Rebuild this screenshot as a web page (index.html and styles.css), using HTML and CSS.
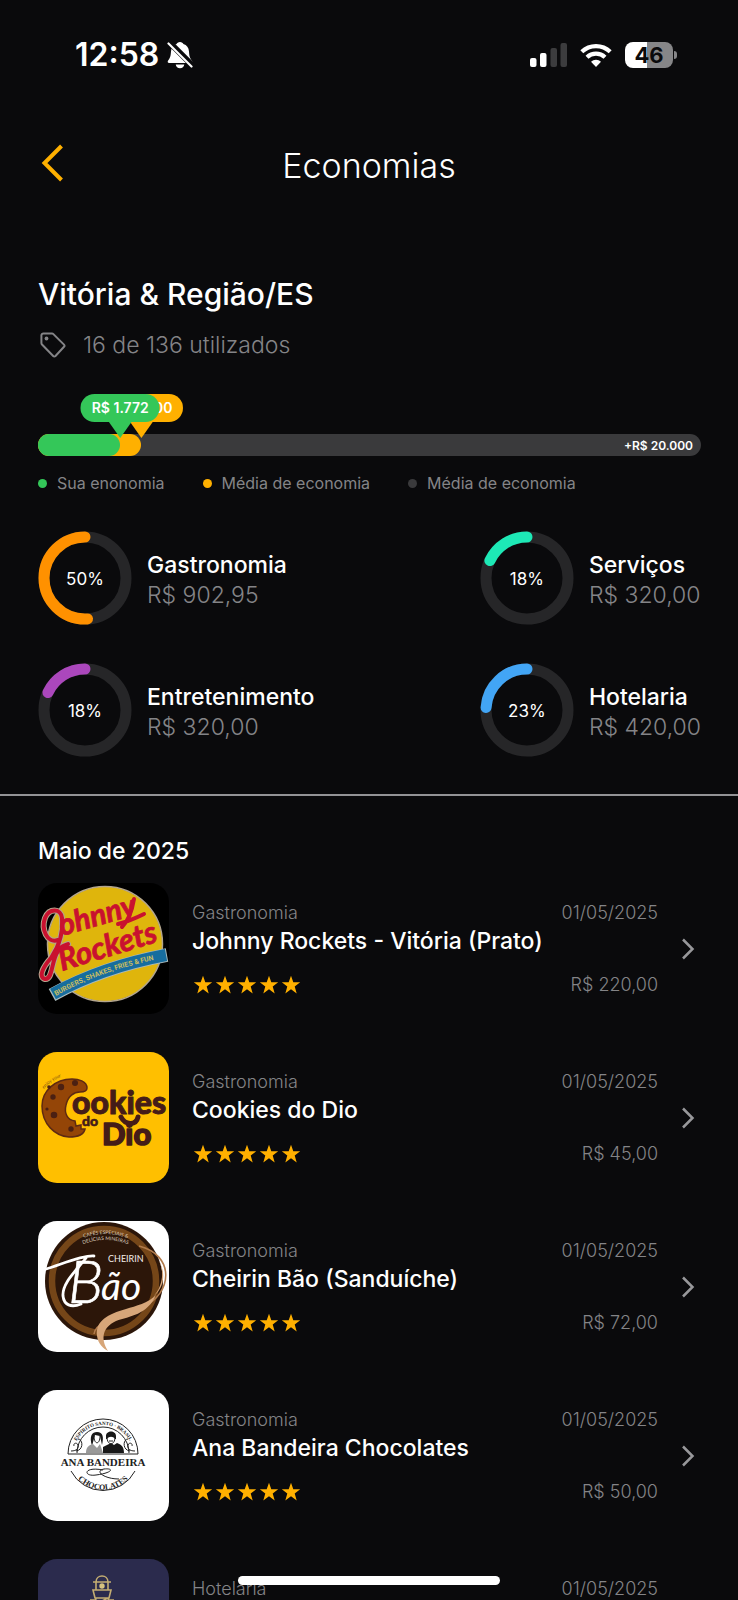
FILE: index.html
```html
<!DOCTYPE html>
<html lang="pt-BR">
<head>
<meta charset="utf-8">
<meta name="viewport" content="width=device-width, initial-scale=1">
<title>Economias</title>
<link rel="stylesheet" href="styles.css">
</head>
<body>
<svg width="0" height="0" class="defs" aria-hidden="true">
  <defs>
    <symbol id="star" viewBox="0 0 20 20"><path d="M10 0.8 12.3 7.3H19.2L13.7 11.5 15.7 18.4 10 14.3 4.3 18.4 6.3 11.5 0.8 7.3H7.7Z"/></symbol>
    <symbol id="chevron" viewBox="0 0 14 22"><path d="M2 1.5 11.5 11 2 20.5" fill="none" stroke="currentColor" stroke-width="2.5"/></symbol>
  </defs>
</svg>
<div class="screen">
  <div class="status">
    <div class="status-side">
      <span class="clock">12:58</span>
      <svg class="bell" width="26" height="28" viewBox="0 0 26 28" aria-label="Silencioso">
        <path fill="currentColor" d="M13 1c1.8 0 3 1 3.4 2.1 3.400 1 5.300 3.800 5.600 7.400.3 4.500.8 6.500 3 9.200.7 1 .2 2.300-1.100 2.300H2.100C.8 22 .3 20.700 1 19.700c2.200-2.700 2.700-4.700 3-9.200.3-3.600 2.200-6.400 5.600-7.400C10 2 11.200 1 13 1ZM8.700 23.500h8.600c-.3 2.200-2 3.700-4.300 3.700s-4-1.500-4.300-3.700Z"/>
        <path d="M2 1 26 25" stroke="#0a0a0c" stroke-width="6"/>
        <path d="M1.500 2.500 24.500 25.500" stroke="currentColor" stroke-width="2.200" stroke-linecap="round"/>
      </svg>
    </div>
    <div class="status-side">
      <svg width="37" height="24" viewBox="0 0 37 24" aria-label="Sinal">
        <g fill="#fff"><rect x="0" y="15" width="6.500" height="9" rx="2"/><rect x="10" y="10" width="6.500" height="14" rx="2"/></g>
        <g fill="#3c3c3e"><rect x="20.500" y="5" width="6.500" height="19" rx="2"/><rect x="30.500" y="0" width="6.500" height="24" rx="2"/></g>
      </svg>
      <svg class="wifi" width="32" height="24" viewBox="0 0 32 24" aria-label="Wi-Fi">
        <g fill="none" stroke="#fff" stroke-width="4.200"><path d="M1.800 8.800a20.500 20.500 0 0 1 28.400 0"/><path d="M7 14.300a13 13 0 0 1 18 0"/></g>
        <path fill="#fff" d="M16 24 11 18.700a7.200 7.200 0 0 1 10 0Z"/>
      </svg>
      <div class="battery"><span>46</span></div>
    </div>
  </div>

  <header class="header">
    <button class="back" type="button" aria-label="Voltar">
      <svg width="22" height="38" viewBox="0 0 22 38"><path d="M20.500 2 3.500 19 20.500 36" fill="none" stroke="currentColor" stroke-width="4"/></svg>
    </button>
    <h1>Economias</h1>
  </header>

  <section class="summary">
    <h2>Vitória &amp; Região/ES</h2>
    <p class="used">
      <svg width="26" height="26" viewBox="0 0 26 26" aria-hidden="true"><path d="M3.500 1.500H12a2 2 0 0 1 1.400.6L24 12.600a1.600 1.600 0 0 1 0 2.200L15.500 24a1.600 1.600 0 0 1-2.300 0L2 12.500a2 2 0 0 1-.6-1.400V3.500a2 2 0 0 1 2.100-2Z" fill="none" stroke="currentColor" stroke-width="2"/><circle cx="6.500" cy="6.500" r="1.900" fill="currentColor"/></svg>
      16 de 136 utilizados
    </p>

    <div class="bar">
      <div class="fill average" style="width:15.5%"></div>
      <div class="fill own" style="width:12.3%"></div>
      <span class="tip average" style="left:15.6%">R$ 2.300</span>
      <span class="tip own" style="left:12.4%">R$ 1.772</span>
      <span class="limit">+R$ 20.000</span>
    </div>
    <ul class="legend">
      <li class="l-own">Sua enonomia</li>
      <li class="l-average">Média de economia</li>
      <li class="l-rest">Média de economia</li>
    </ul>

    <div class="rings">
      <div class="ring-item">
        <div class="ring"><svg viewBox="0 0 94 94"><circle class="track" cx="47" cy="47" r="41"/><circle class="arc food" pathLength="100" stroke-dasharray="51 100" cx="47" cy="47" r="41"/></svg><span>50%</span></div>
        <div class="ring-text"><h3>Gastronomia</h3><p>R$ 902,95</p></div>
      </div>
      <div class="ring-item">
        <div class="ring"><svg viewBox="0 0 94 94"><circle class="track" cx="47" cy="47" r="41"/><circle class="arc services" pathLength="100" stroke-dasharray="18 100" cx="47" cy="47" r="41"/></svg><span>18%</span></div>
        <div class="ring-text"><h3>Serviços</h3><p>R$ 320,00</p></div>
      </div>
      <div class="ring-item">
        <div class="ring"><svg viewBox="0 0 94 94"><circle class="track" cx="47" cy="47" r="41"/><circle class="arc fun" pathLength="100" stroke-dasharray="18 100" cx="47" cy="47" r="41"/></svg><span>18%</span></div>
        <div class="ring-text"><h3>Entretenimento</h3><p>R$ 320,00</p></div>
      </div>
      <div class="ring-item">
        <div class="ring"><svg viewBox="0 0 94 94"><circle class="track" cx="47" cy="47" r="41"/><circle class="arc hotel" pathLength="100" stroke-dasharray="24 100" cx="47" cy="47" r="41"/></svg><span>23%</span></div>
        <div class="ring-text"><h3>Hotelaria</h3><p>R$ 420,00</p></div>
      </div>
    </div>
  </section>

  <section class="history">
    <h2>Maio de 2025</h2>
    <a class="row" href="#johnny-rockets">
      <svg class="thumb" viewBox="0 0 131 131" role="img" aria-label="Johnny Rockets">
        <rect width="131" height="131" fill="#000"/>
        <circle cx="67" cy="61" r="57.500" fill="#dfb50c" stroke="#b3a58d" stroke-width="1.500"/>
        <g fill="none" stroke-linecap="round" stroke-linejoin="round">
          <path d="M20 57C9 61 3 46 7 35c4-10 16-10 17 0 2 18-5 31-11 40C5 84 0 94 7 96c8 1 6-18 13-28 2-4 5-5 10-7" stroke="#b3a58d" stroke-width="6"/>
          <path d="M20 57C9 61 3 46 7 35c4-10 16-10 17 0 2 18-5 31-11 40C5 84 0 94 7 96c8 1 6-18 13-28 2-4 5-5 10-7" stroke="#c9112f" stroke-width="4"/>
          <path d="M80 41C88 39 96 36 106 31M96 16C94 28 90 38 84 44" stroke="#c9112f" stroke-width="4"/>
        </g>
        <g fill="#c9112f" stroke="#c9112f" stroke-width="0.800" font-family="Lato, sans-serif" font-style="italic" font-weight="700">
          <text font-size="30" transform="translate(24 53) rotate(-16)">ohnny</text>
          <text font-size="31" transform="translate(24 88) rotate(-17)">Rockets</text>
        </g>
        <path d="M14 112Q64 84 129 72" fill="none" stroke="#a9b9ba" stroke-width="13.500"/>
        <path d="M15 111Q64 84 128 72" fill="none" stroke="#176d9e" stroke-width="12"/>
        <path id="jr-text" d="M18 113Q65 86 131 74" fill="none"/>
        <text font-family="Roboto, sans-serif" font-size="7" font-weight="700" fill="#c9bd5e"><textPath href="#jr-text">BURGERS, SHAKES, FRIES &amp; FUN</textPath></text>
      </svg>
      <div class="info">
        <span class="meta">Gastronomia</span><time class="meta end">01/05/2025</time>
        <strong>Johnny Rockets - Vitória (Prato)</strong>
        <span class="stars" role="img" aria-label="5 estrelas"><svg><use href="#star"/></svg><svg><use href="#star"/></svg><svg><use href="#star"/></svg><svg><use href="#star"/></svg><svg><use href="#star"/></svg></span><span class="meta end price">R$ 220,00</span>
      </div>
      <svg class="go" aria-hidden="true"><use href="#chevron"/></svg>
    </a>
    <a class="row" href="#cookies-do-dio">
      <svg class="thumb" viewBox="0 0 131 131" role="img" aria-label="Cookies do Dio">
        <rect width="131" height="131" fill="#ffbf00"/>
        <path d="M49 36C49 29 40 27 34 27 17 27 4 39 4 54c0 18 13 30 27 31 9 0 15-3 16-8l-4 0 0-4-5 1-1-5c-8-1-11-8-9-16 2-9 8-13 14-13 4 0 7-1 7-4Z" fill="#944507" stroke="#5e2a12" stroke-width="1.500"/>
        <g fill="#4b2012"><circle cx="23" cy="35" r="3.200"/><circle cx="37" cy="31" r="3"/><circle cx="15" cy="45" r="2.700"/><circle cx="11" cy="35" r="1.800"/><circle cx="16" cy="63" r="3.300"/><circle cx="33" cy="77" r="2.700"/><circle cx="9" cy="57" r="1.600"/></g>
        <path id="cd-enjoy" d="M6 37Q14 27 29 23" fill="none"/>
        <text font-family="Lato, sans-serif" font-size="5" font-style="italic" fill="#8a5a10"><textPath href="#cd-enjoy">enjoy your</textPath></text>
        <g font-family="Lato, sans-serif" font-weight="900" fill="#451c18" stroke="#451c18" stroke-linejoin="round">
          <text x="34" y="62" font-size="32" stroke-width="1">ookies</text>
          <text x="44" y="74" font-size="14" stroke-width="0.600">do</text>
          <text x="64" y="93" font-size="31" stroke-width="1.500">Dio</text>
        </g>
        <path d="M83 65c4 8 15 9 17 0" fill="none" stroke="#451c18" stroke-width="5" stroke-linecap="round"/>
      </svg>
      <div class="info">
        <span class="meta">Gastronomia</span><time class="meta end">01/05/2025</time>
        <strong>Cookies do Dio</strong>
        <span class="stars" role="img" aria-label="5 estrelas"><svg><use href="#star"/></svg><svg><use href="#star"/></svg><svg><use href="#star"/></svg><svg><use href="#star"/></svg><svg><use href="#star"/></svg></span><span class="meta end price">R$ 45,00</span>
      </div>
      <svg class="go" aria-hidden="true"><use href="#chevron"/></svg>
    </a>
    <a class="row" href="#cheirin-bao">
      <svg class="thumb" viewBox="0 0 131 131" role="img" aria-label="Cheirin Bão">
        <rect width="131" height="131" fill="#fff"/>
        <circle cx="66" cy="60" r="59" fill="#2c1609"/>
        <circle cx="66" cy="60" r="52" fill="#2c1609" stroke="#754618" stroke-width="6.500"/>
        <path id="cb-a" d="M43 18Q66 8 92 18" fill="none"/><path id="cb-b" d="M43 24Q66 14 92 24" fill="none"/>
        <g font-family="Lato, sans-serif" font-size="5" fill="#d9cabb"><text><textPath href="#cb-a" startOffset="3">CAFÉS ESPECIAIS &amp;</textPath></text><text><textPath href="#cb-b" startOffset="2">DELÍCIAS MINEIRAS</textPath></text></g>
        <path d="M101 25c36 9 34 47 4 61-18 8-48 14-49 27" fill="none" stroke="#b17a4b" stroke-width="1.600"/>
        <path d="M118 74c-8 8-20 11-30 14-18 5-31 12-29 27 1 8 7 13 11 15-8-13-5-24 8-30 14-5 31-6 40-26Z" fill="#d7a679"/>
        <path d="M121 40c6 12 3 26-6 36 10-8 14-22 6-36Z" fill="#d7a679"/>
        <text x="70" y="41" font-family="Lato, sans-serif" font-size="9" fill="#f4eee9">CHEIRIN</text>
        <path d="M8 48C22 44 44 34 56 35M48 37C38 50 24 62 25 75c1 9 8 12 18 8" fill="none" stroke="#fff" stroke-width="2.800" stroke-linecap="round"/>
        <text x="30" y="82" font-family="Lato, sans-serif" font-size="60" font-style="italic" font-weight="300" fill="#fff" stroke="#fff" stroke-width="0.600">B</text>
        <text x="63" y="79" font-family="Lato, sans-serif" font-size="39" font-style="italic" fill="#fff">ão</text>
      </svg>
      <div class="info">
        <span class="meta">Gastronomia</span><time class="meta end">01/05/2025</time>
        <strong>Cheirin Bão (Sanduíche)</strong>
        <span class="stars" role="img" aria-label="5 estrelas"><svg><use href="#star"/></svg><svg><use href="#star"/></svg><svg><use href="#star"/></svg><svg><use href="#star"/></svg><svg><use href="#star"/></svg></span><span class="meta end price">R$ 72,00</span>
      </div>
      <svg class="go" aria-hidden="true"><use href="#chevron"/></svg>
    </a>
    <a class="row" href="#ana-bandeira">
      <svg class="thumb" viewBox="0 0 131 131" role="img" aria-label="Ana Bandeira Chocolates">
        <rect width="131" height="131" fill="#fff"/>
        <g fill="none" stroke="#222" stroke-width="1"><path d="M30 64a35 35 0 0 1 70 0M39 63a26 26 0 0 1 52 0M33 81a36 36 0 0 0 64 0M30 64H100"/>
          <path d="M33 61c6 0 8-3 7-6s-5-2-4 1M38 61c8-1 7-12 2-12M97 61c-6 0-8-3-7-6s5-2 4 1M92 61c-8-1-7-12-2-12M65 80c-20-4-20 7-7 5 16-2 19-7 8-6-10 2 0 10 15 10"/></g>
        <path d="M65 63V57l8-4 3 2 3-2c5 2 7 4 7 10ZM68 46c0-6 10-6 10 0v3h-1c-2-3-6-3-8 0h-1ZM54 56c-3-10 0-14 5-14 6 0 7 5 5 13l-2-9-5-1Z" fill="#181818"/>
        <path d="M48 63c0-6 3-8 7-9l4 4 3-4 3 9Z" fill="#999"/>
        <g fill="none" stroke="#222" stroke-width="1"><path d="M56 46c0 9 6 9 6 0M69 47c0 9 8 9 8 0M71 51h4"/></g>
        <path id="ab-top" d="M35 65a30 30 0 0 1 60 0" fill="none"/><path id="ab-bottom" d="M33 79a35 35 0 0 0 64 0" fill="none"/>
        <g font-family="'Liberation Serif', serif" font-weight="700" fill="#222">
          <text font-size="5" text-anchor="middle"><textPath href="#ab-top" startOffset="50%">ESPÍRITO SANTO · BRASIL</textPath></text>
          <text x="65" y="76" font-size="11" text-anchor="middle">ANA BANDEIRA</text>
          <text font-size="8" text-anchor="middle"><textPath href="#ab-bottom" startOffset="50%">CHOCOLATES</textPath></text>
        </g>
      </svg>
      <div class="info">
        <span class="meta">Gastronomia</span><time class="meta end">01/05/2025</time>
        <strong>Ana Bandeira Chocolates</strong>
        <span class="stars" role="img" aria-label="5 estrelas"><svg><use href="#star"/></svg><svg><use href="#star"/></svg><svg><use href="#star"/></svg><svg><use href="#star"/></svg><svg><use href="#star"/></svg></span><span class="meta end price">R$ 50,00</span>
      </div>
      <svg class="go" aria-hidden="true"><use href="#chevron"/></svg>
    </a>
    <a class="row" href="#hotel">
      <svg class="thumb" viewBox="0 0 131 131" role="img" aria-label="Hotel">
        <rect width="131" height="131" fill="#2b2b4d"/>
        <g fill="none" stroke="#c3ad72" stroke-width="1.600"><path d="M58 23c0-8 12-8 12 0M55 23h18M58 23v8M70 23v8M55 31h18l-2 8H57ZM58 39l-1 8M70 39l2 8M58 45l12-6M52 41h6M70 41h6M56 47h16l3 45H53Z"/></g>
        <circle cx="64" cy="27" r="2.700" fill="#d5c180"/>
      </svg>
      <div class="info">
        <span class="meta">Hotelaria</span><time class="meta end">01/05/2025</time>
      </div>
      <svg class="go" aria-hidden="true"><use href="#chevron"/></svg>
    </a>
  </section>
  <div class="home-indicator"></div>
</div>
</body>
</html>
```

FILE: styles.css
```css
:root {
  --bg: #0a0a0c;
  --muted: #848487;
  --amber: #ffb000;
  --green: #34c759;
  --rest: #3a3a3c;
}
* { box-sizing: border-box; }
body {
  margin: 0;
  background: var(--bg);
  color: #fff;
  font-family: Inter, "Liberation Sans", sans-serif;
}
h1, h2, h3, p, ul { margin: 0; padding: 0; }
.defs { position: absolute; }
.screen {
  position: relative;
  height: 100vh;
  overflow: hidden;
}

.status {
  display: flex;
  justify-content: space-between;
  align-items: center;
  height: 110px;
  padding: 0 61px 0 75px;
}
.status-side { display: flex; align-items: center; }
.clock { font-size: 32px; font-weight: 600; line-height: 32px; }
.bell { margin-left: 8px; }
.wifi { margin: 0 13px; }
.battery {
  position: relative;
  width: 48px;
  height: 26px;
  margin-right: 4px;
  border-radius: 8px;
  background: linear-gradient(90deg, #fff 46%, #868688 46%);
  color: var(--bg);
  font-size: 22px;
  font-weight: 700;
  line-height: 26px;
  text-align: center;
}
.battery::after {
  content: "";
  position: absolute;
  left: 49px;
  top: 9px;
  width: 3px;
  height: 8px;
  border-radius: 0 4px 4px 0;
  background: #868688;
}

.header {
  display: grid;
  grid-template-columns: 60px 1fr 60px;
  align-items: center;
  height: 112px;
  padding: 0 38px;
}
.header h1 { font-size: 34px; font-weight: 300; line-height: 40px; text-align: center; }
.back {
  display: flex;
  padding: 0 3px 6px;
  border: 0;
  background: none;
  color: var(--amber);
}

.summary {
  padding: 54px 37px 37px 38px;
  border-bottom: 2px solid #939396;
}
.summary h2 { font-size: 30px; font-weight: 500; line-height: 36px; }
.used {
  display: flex;
  align-items: center;
  gap: 17px;
  margin-top: 19px;
  padding-left: 2px;
  color: var(--muted);
  font-size: 23px;
  font-weight: 300;
  line-height: 28px;
}
.bar {
  position: relative;
  display: flex;
  align-items: center;
  justify-content: flex-end;
  height: 22px;
  margin-top: 75px;
  padding-right: 8px;
  border-radius: 11px;
  background: var(--rest);
}
.limit { font-size: 12px; font-weight: 600; }
.fill {
  position: absolute;
  left: 0;
  top: 0;
  height: 100%;
  border-radius: 11px;
}
.average { background: var(--amber); }
.own { background: var(--green); }
.tip {
  position: absolute;
  bottom: 34px;
  width: 79px;
  border-radius: 14px;
  font-size: 14px;
  font-weight: 600;
  line-height: 28px;
  text-align: center;
  transform: translateX(-50%);
}
.tip.average { width: 84px; }
.tip::after {
  content: "";
  position: absolute;
  left: calc(50% - 12px);
  top: 27px;
  width: 24px;
  height: 17px;
  background: inherit;
  clip-path: polygon(0 0, 100% 0, 50% 100%);
}
.legend {
  display: flex;
  gap: 38px;
  margin-top: 18px;
  color: var(--muted);
  font-size: 16px;
  line-height: 18px;
  list-style: none;
}
.legend li { display: flex; align-items: center; gap: 10px; }
.legend li::before {
  content: "";
  width: 9px;
  height: 9px;
  border-radius: 50%;
  background: var(--rest);
}
.legend .l-own::before { background: var(--green); }
.legend .l-average::before { background: var(--amber); }

.rings {
  display: grid;
  grid-template-columns: 1fr auto;
  gap: 38px;
  margin-top: 39px;
}
.ring-item { display: flex; align-items: center; gap: 15px; }
.ring { display: grid; place-items: center; width: 94px; height: 94px; font-size: 17px; font-weight: 400; }
.ring > * { grid-area: 1 / 1; }
.ring span { padding-top: 2px; }
.ring svg { width: 94px; height: 94px; }
.ring circle { fill: none; stroke-width: 11px; }
.track { stroke: #262628; }
.arc { stroke-linecap: round; transform: scaleX(-1) rotate(-90deg); transform-origin: center; }
.food { stroke: #ff9100; }
.services { stroke: #1de9b6; }
.fun { stroke: #ab47bc; }
.hotel { stroke: #42a5f5; }
.ring-text { padding-top: 4px; font-size: 23px; line-height: 30px; }
.ring-text h3 { font-size: inherit; font-weight: 500; }
.ring-text p { color: var(--muted); font-weight: 300; }

.history { display: flex; flex-direction: column; padding: 41px 38px 38px; }
.history h2 { font-size: 23px; font-weight: 500; line-height: 28px; }
.row {
  display: flex;
  align-items: center;
  gap: 23px;
  margin-top: 38px;
  color: inherit;
  text-decoration: none;
}
.history h2 + .row { margin-top: 18px; }
.thumb { flex: none; width: 131px; height: 131px; border-radius: 19px; }
.info {
  flex: 1;
  display: grid;
  grid-template-columns: 1fr auto;
  grid-template-rows: 24px 28px 40px;
}
.info strong { grid-column: 1 / -1; font-size: 23px; font-weight: 500; line-height: 28px; }
.meta { color: var(--muted); font-size: 18px; font-weight: 300; line-height: 20px; }
.end { text-align: right; }
.stars, .price { align-self: end; }
.stars { display: flex; gap: 2px; padding-left: 1px; }
.stars svg { width: 20px; height: 20px; fill: var(--amber); }
.go { flex: none; width: 14px; height: 22px; margin-right: 5px; color: #98989b; }

.home-indicator {
  position: absolute;
  left: 50%;
  bottom: 15px;
  width: 262px;
  height: 9px;
  border-radius: 5px;
  background: #fff;
  transform: translateX(-50%);
}
```
